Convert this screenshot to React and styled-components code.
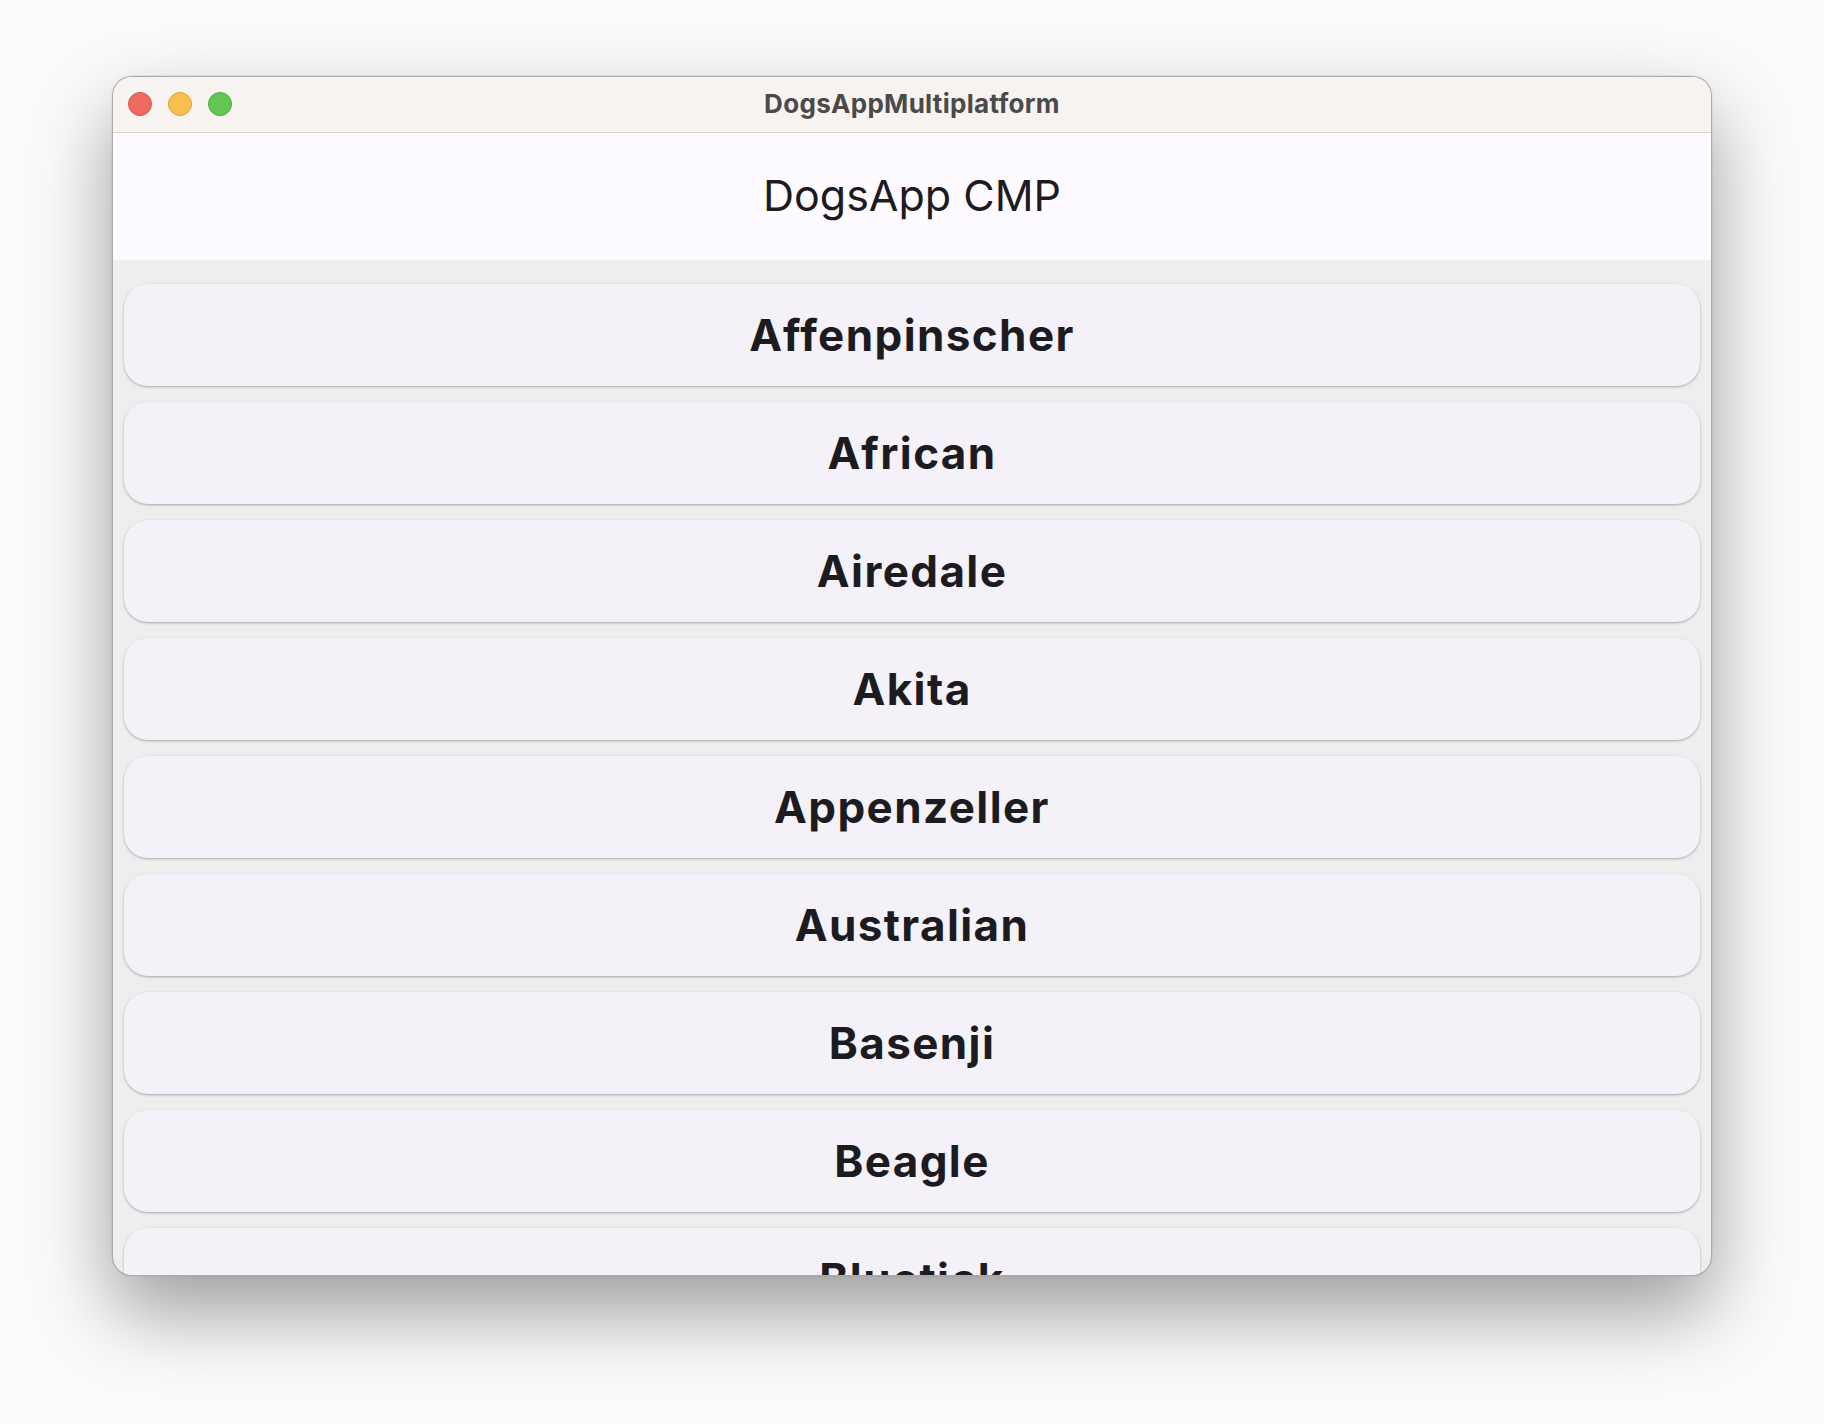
import React from 'react'
import styled, { createGlobalStyle } from 'styled-components'

const GlobalStyle = createGlobalStyle`
  * {
    box-sizing: border-box;
  }

  body {
    margin: 0;
    background: #ffffff;
    font-family: Inter, 'Noto Sans', sans-serif;
  }
`

const Page = styled.div`
  width: 1824px;
  height: 1424px;
  padding: 76px 112px 148px;
  background: #fbfbfb;
`

const Window = styled.div`
  display: flex;
  flex-direction: column;
  width: 1600px;
  height: 1200px;
  border-radius: 20px;
  overflow: hidden;
  border: 1px solid rgba(0, 0, 0, 0.28);
  background: #eeeeee;
  box-shadow: 0 36px 80px rgba(0, 0, 0, 0.38), 0 0 0 1px rgba(0, 0, 0, 0.05);
`

const TitleBar = styled.div`
  display: grid;
  grid-template-columns: 1fr auto 1fr;
  align-items: center;
  height: 56px;
  flex-shrink: 0;
  padding: 0 15px 2px;
  background: #f7f3f0;
  border-bottom: 1px solid #d6d3d1;
`

const Lights = styled.div`
  display: flex;
  gap: 16px;
`

const Light = styled.span`
  width: 24px;
  height: 24px;
  border-radius: 50%;
  background: ${p => p.color};
  border: 1px solid ${p => p.edge};
`

const WindowTitle = styled.div`
  font-size: 26px;
  font-weight: 700;
  color: #4b4949;
  letter-spacing: 0.3px;
`

const Header = styled.header`
  display: flex;
  align-items: center;
  justify-content: center;
  height: 127px;
  flex-shrink: 0;
  padding-bottom: 4px;
  background: #fdfbff;
  font-size: 43px;
  color: #1c1b1f;
`

const List = styled.div`
  display: flex;
  flex-direction: column;
  gap: 16px;
  flex: 1;
  overflow: hidden;
  padding: 24px 11px;
`

const Card = styled.div`
  display: flex;
  align-items: center;
  justify-content: center;
  height: 102px;
  flex-shrink: 0;
  border-radius: 24px;
  background: #f4f2f8;
  box-shadow: 0 1px 2px rgba(0, 0, 0, 0.22), 0 1px 3px 1px rgba(0, 0, 0, 0.06);
  font-size: 44px;
  font-weight: 700;
  letter-spacing: 1.4px;
  color: #1c1b1f;
`

const breeds = [
  'Affenpinscher',
  'African',
  'Airedale',
  'Akita',
  'Appenzeller',
  'Australian',
  'Basenji',
  'Beagle',
  'Bluetick',
]

const App = () => {
  return (
    <>
      <GlobalStyle />
      <Page>
        <Window>
          <TitleBar>
            <Lights>
              <Light color='#ee6a5f' edge='#d1554b' />
              <Light color='#f6bf4f' edge='#d9a23a' />
              <Light color='#62c655' edge='#4ea942' />
            </Lights>
            <WindowTitle>DogsAppMultiplatform</WindowTitle>
            <span />
          </TitleBar>
          <Header>DogsApp CMP</Header>
          <List>
            {breeds.map(b => (
              <Card key={b}>{b}</Card>
            ))}
          </List>
        </Window>
      </Page>
    </>
  )
}

export default App
